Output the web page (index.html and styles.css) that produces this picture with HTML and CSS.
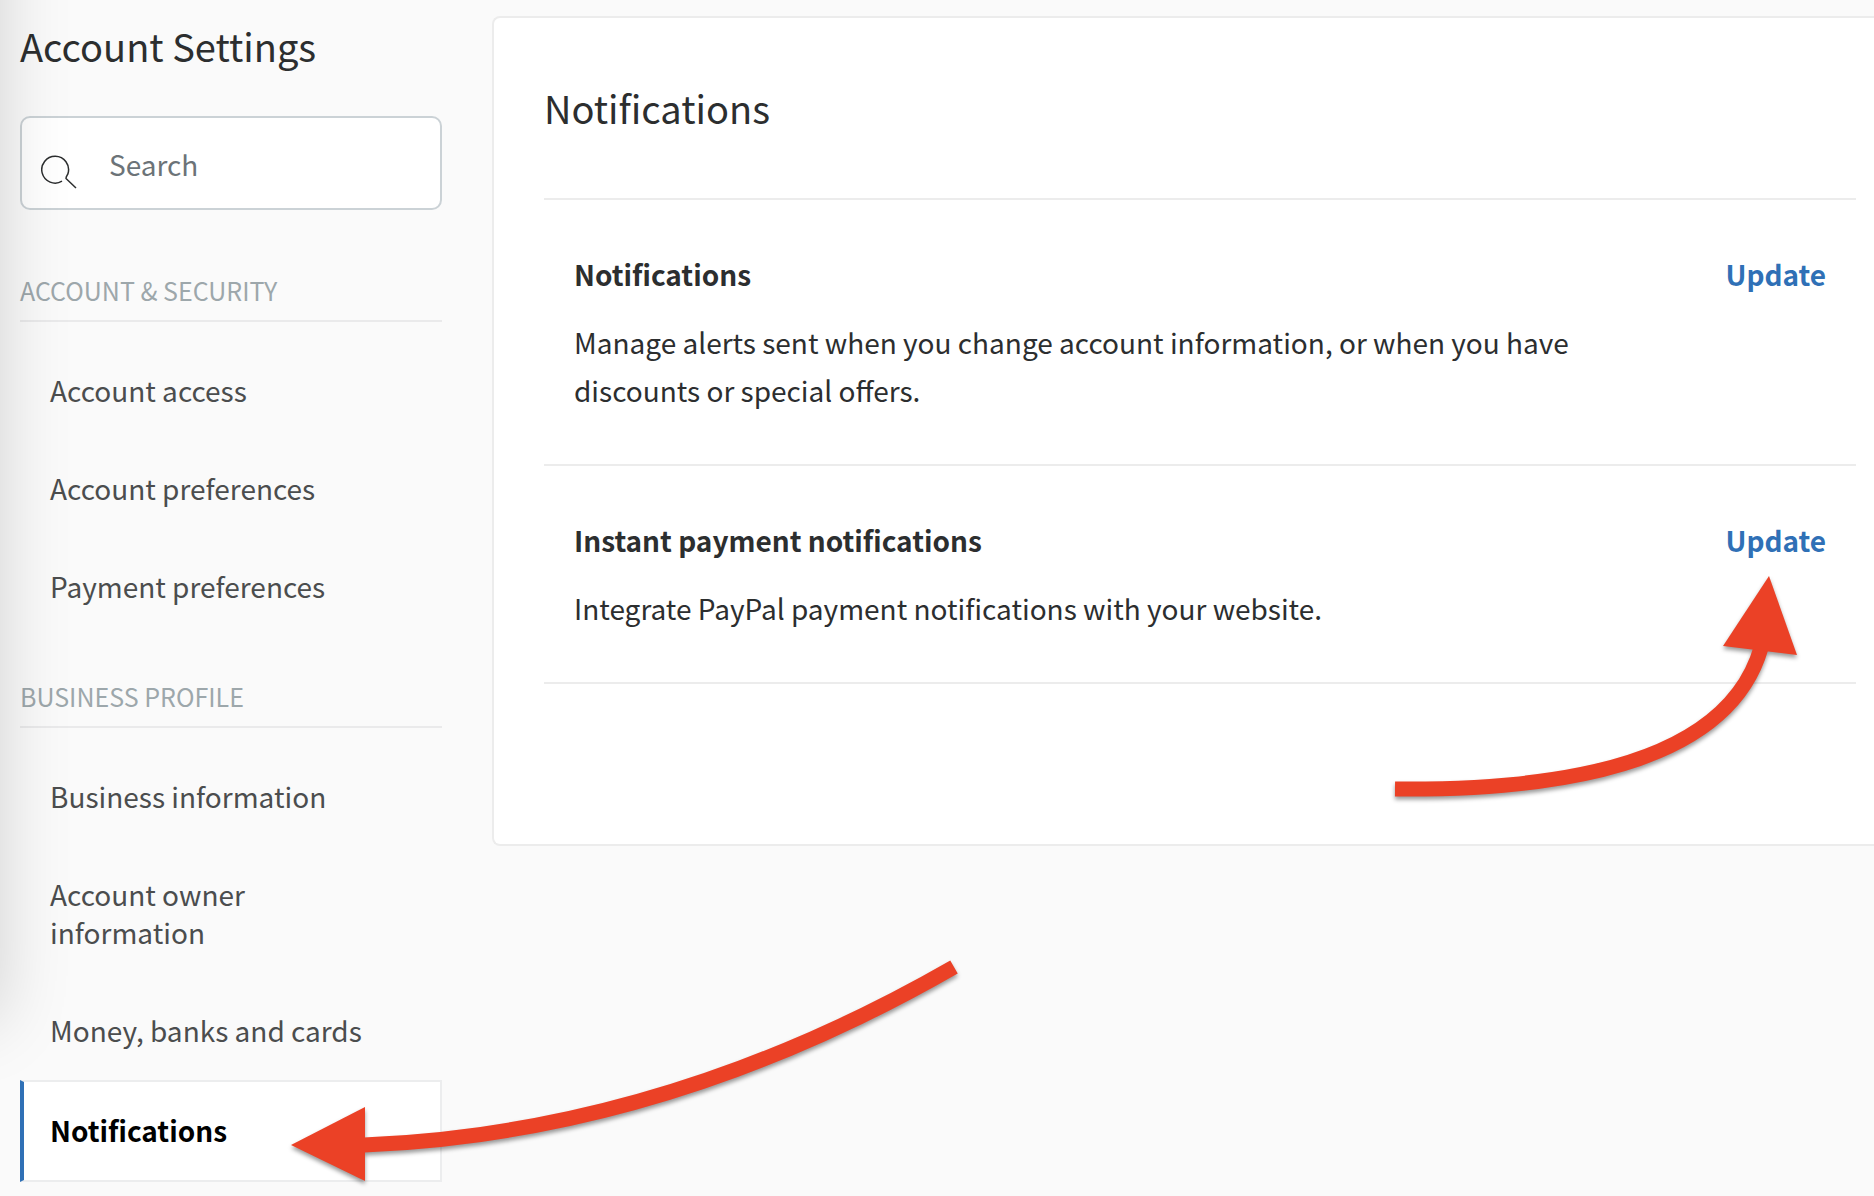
FILE: index.html
```html
<!DOCTYPE html>
<html lang="en">
<head>
  <meta charset="utf-8">
  <title>Account Settings</title>
  <link rel="stylesheet" href="styles.css">
</head>
<body>
  <div class="page">
    <aside class="sidebar">
      <h1 class="title">Account Settings</h1>

      <form class="search">
        <svg class="search-icon" viewBox="0 0 36 34" aria-hidden="true">
          <path d="M21 26.2A13.4 13.4 0 1 1 27 18.5C26.5 20.3 25 21.5 25 23.5L35 33"/>
        </svg>
        <input type="search" class="search-input" placeholder="Search" aria-label="Search">
      </form>

      <nav>
        <h2 class="group">ACCOUNT &amp; SECURITY</h2>
        <ul class="menu">
          <li><a href="#" class="item">Account access</a></li>
          <li><a href="#" class="item">Account preferences</a></li>
          <li><a href="#" class="item">Payment preferences</a></li>
        </ul>

        <h2 class="group">BUSINESS PROFILE</h2>
        <ul class="menu">
          <li><a href="#" class="item">Business information</a></li>
          <li><a href="#" class="item">Account owner<br>information</a></li>
          <li><a href="#" class="item">Money, banks and cards</a></li>
          <li class="current">
            <a href="#" class="item active">Notifications</a>
            <svg class="arrow arrow-menu" viewBox="0 0 667 221" aria-hidden="true">
              <path class="line" d="M73 184Q374 172 663 6"/>
              <path class="head" d="M0 184L74 146L74 220Z"/>
            </svg>
          </li>
        </ul>
      </nav>
    </aside>

    <main class="card">
      <h2 class="card-title">Notifications</h2>

      <section class="row">
        <div class="info">
          <h3 class="name">Notifications</h3>
          <p class="text">Manage alerts sent when you change account information, or when you have discounts or special offers.</p>
        </div>
        <a href="#" class="update">Update</a>
      </section>

      <section class="row">
        <div class="info">
          <h3 class="name">Instant payment notifications</h3>
          <p class="text">Integrate PayPal payment notifications with your website.</p>
        </div>
        <a href="#" class="update">Update</a>
        <svg class="arrow arrow-update" viewBox="0 0 403 221" aria-hidden="true">
          <path class="line" d="M0 213C215 215 338 168 366 72"/>
          <path class="head" d="M374 0L328 70L402 79Z"/>
        </svg>
      </section>
    </main>

    <div class="edge-shadow"></div>
  </div>
</body>
</html>
```

FILE: styles.css
```css
* {
  box-sizing: border-box;
}

body {
  margin: 0;
  background: #fafafa;
  color: #2c2e2f;
  font-family: "Noto Sans CJK SC", "Open Sans", sans-serif;
  font-size: 28px;
  line-height: 38px;
}

h1, h2, h3, p, ul {
  margin: 0;
  padding: 0;
  font-weight: normal;
}

a {
  text-decoration: none;
}

.page {
  position: relative;
  display: flex;
  align-items: flex-start;
  gap: 50px;
  min-height: 100vh;
  padding: 16px 0 14px 20px;
  overflow: hidden;
}

/* sidebar */
.sidebar {
  flex: none;
  width: 422px;
}

.title {
  font-size: 38px;
  line-height: 60px;
  margin-bottom: 40px;
}

.search {
  display: flex;
  align-items: center;
  height: 94px;
  margin-bottom: 20px;
  padding-left: 19px;
  background: #fff;
  border: 2px solid #cbd2d6;
  border-radius: 10px;
}

.search-icon {
  flex: none;
  width: 36px;
  height: 34px;
  margin-top: 18px;
  fill: none;
  stroke: #2c2e2f;
  stroke-width: 1.5;
  stroke-linejoin: round;
}

.search-input {
  flex: 1;
  min-width: 0;
  height: 90px;
  padding: 2px 20px 0 32px;
  border: none;
  outline: none;
  background: none;
  color: #2c2e2f;
  font: inherit;
}

.search-input::placeholder {
  color: #6c7378;
}

.group {
  height: 92px;
  padding-top: 41px;
  border-bottom: 2px solid #eaeaeb;
  color: #9da7ab;
  font-size: 25px;
}

.menu {
  padding-top: 20px;
  list-style: none;
}

.item {
  display: block;
  padding: 29px 30px 31px;
  color: #4b4d4e;
}

.current {
  position: relative;
}

.active {
  padding: 29px 26px 31px;
  background: #fff;
  border: 2px solid #ecedee;
  border-left: 4px solid #2f70b6;
  color: #000;
  font-weight: bold;
}

/* content card */
.card {
  flex: 1;
  height: auto;
  padding: 0 18px 160px 50px;
  background: #fff;
  border: 2px solid #ececec;
  border-right: none;
  border-radius: 8px 0 0 8px;
}

.card-title {
  padding: 66px 0;
  border-bottom: 2px solid #ececec;
  font-size: 38px;
  line-height: 48px;
}

.row {
  position: relative;
  display: flex;
  justify-content: space-between;
  padding: 50px 30px;
  border-bottom: 2px solid #ececec;
  line-height: 48px;
}

.info {
  max-width: 1060px;
}

.name {
  margin-bottom: 20px;
  font-size: 28px;
  font-weight: bold;
}

.update {
  color: #2f70b6;
  font-weight: bold;
}

/* red pointers */
.arrow {
  position: absolute;
  overflow: visible;
  pointer-events: none;
  filter: drop-shadow(0 3px 2px rgba(0, 0, 0, 0.4));
}

.arrow .line {
  fill: none;
  stroke: #eb4126;
  stroke-width: 15;
}

.arrow .head {
  fill: #eb4126;
}

.arrow-menu {
  top: -119px;
  left: 271px;
  width: 667px;
  height: 221px;
}

.arrow-update {
  top: 110px;
  right: 58px;
  width: 403px;
  height: 221px;
}

/* shade that falls on the left side of the page */
.edge-shadow {
  position: absolute;
  top: -200px;
  bottom: 176px;
  left: -200px;
  width: 200px;
  box-shadow: 0 0 70px rgba(0, 0, 0, 0.17);
  pointer-events: none;
}
```
